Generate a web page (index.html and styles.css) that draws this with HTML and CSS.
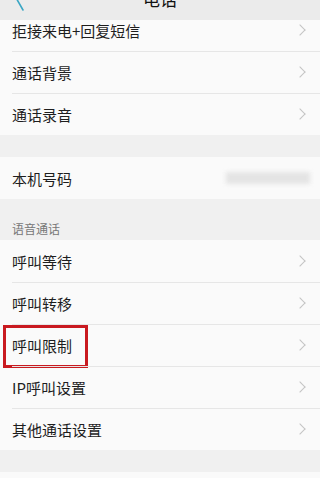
FILE: index.html
```html
<!DOCTYPE html>
<html lang="zh-CN">
<head>
    <meta charset="UTF-8">
    <meta name="viewport" content="width=device-width, initial-scale=1.0">
    <title>电话</title>
    <link rel="stylesheet" href="styles.css">
</head>
<body>
    <div class="topbar">
        <svg class="back" width="14" height="14" viewBox="0 0 14 14">
            <path d="M2 -4 L10 10" fill="none" stroke="#3aa6c4" stroke-width="1.6" stroke-linecap="round"/>
        </svg>
        <span class="bar-title">电话</span>
    </div>

    <div class="screen">
        <ul class="group">
            <li class="row">拒接来电+回复短信 <span class="arrow"></span></li>
            <li class="row">通话背景 <span class="arrow"></span></li>
            <li class="row">通话录音 <span class="arrow"></span></li>
        </ul>

        <div class="gap"></div>

        <ul class="group">
            <li class="row">本机号码 <span class="number"></span></li>
        </ul>

        <div class="section-label">语音通话</div>

        <ul class="group">
            <li class="row">呼叫等待 <span class="arrow"></span></li>
            <li class="row">呼叫转移 <span class="arrow"></span></li>
            <li class="row">呼叫限制 <span class="arrow"></span><span class="mark"></span></li>
            <li class="row">IP呼叫设置 <span class="arrow"></span></li>
            <li class="row">其他通话设置 <span class="arrow"></span></li>
        </ul>

        <div class="gap"></div>
        <div class="rest"></div>
    </div>
</body>
</html>
```

FILE: styles.css
```css
body {
    font-family: "Noto Sans CJK SC", "Noto Sans", sans-serif;
    background-color: #fafafa;
    margin: 0;
    padding: 0;
    color: #1e1e1e;
}
.topbar {
    position: absolute;
    top: 0;
    left: 0;
    right: 0;
    height: 20px;
    background: #ebebeb;
    overflow: hidden;
    z-index: 2;
}
.back {
    position: absolute;
    left: 13px;
    top: 0;
}
.bar-title {
    display: block;
    text-align: center;
    font-size: 17px;
    line-height: 20px;
    margin-top: -11px;
    color: #111;
}
.screen {
    padding-top: 9px;
}
ul {
    list-style: none;
    margin: 0;
    padding: 0;
}
.group {
    background: #fafafa;
}
.row {
    position: relative;
    height: 42px;
    display: flex;
    align-items: center;
    justify-content: space-between;
    padding: 0 12px;
    font-size: 15px;
}
.row + .row::before {
    content: "";
    position: absolute;
    top: 0;
    left: 12px;
    right: 0;
    border-top: 1px solid #e6e6e6;
}
.arrow {
    width: 7px;
    height: 7px;
    border-top: 1px solid #c4c4c4;
    border-right: 1px solid #c4c4c4;
    transform: rotate(45deg);
    margin-right: 4px;
}
.number {
    width: 84px;
    height: 12px;
    margin-right: -2px;
    background: #e4e4e4;
    filter: blur(2px);
}
.mark {
    position: absolute;
    left: 3px;
    top: 1px;
    width: 79px;
    height: 37px;
    border: 3px solid #c91a20;
}
.gap {
    height: 22px;
    background: #f0f0f0;
}
.section-label {
    height: 41px;
    background: #f0f0f0;
    box-sizing: border-box;
    padding: 21px 12px 0;
    font-size: 12px;
    line-height: 18px;
    color: #777;
}
.rest {
    height: 20px;
}
```
